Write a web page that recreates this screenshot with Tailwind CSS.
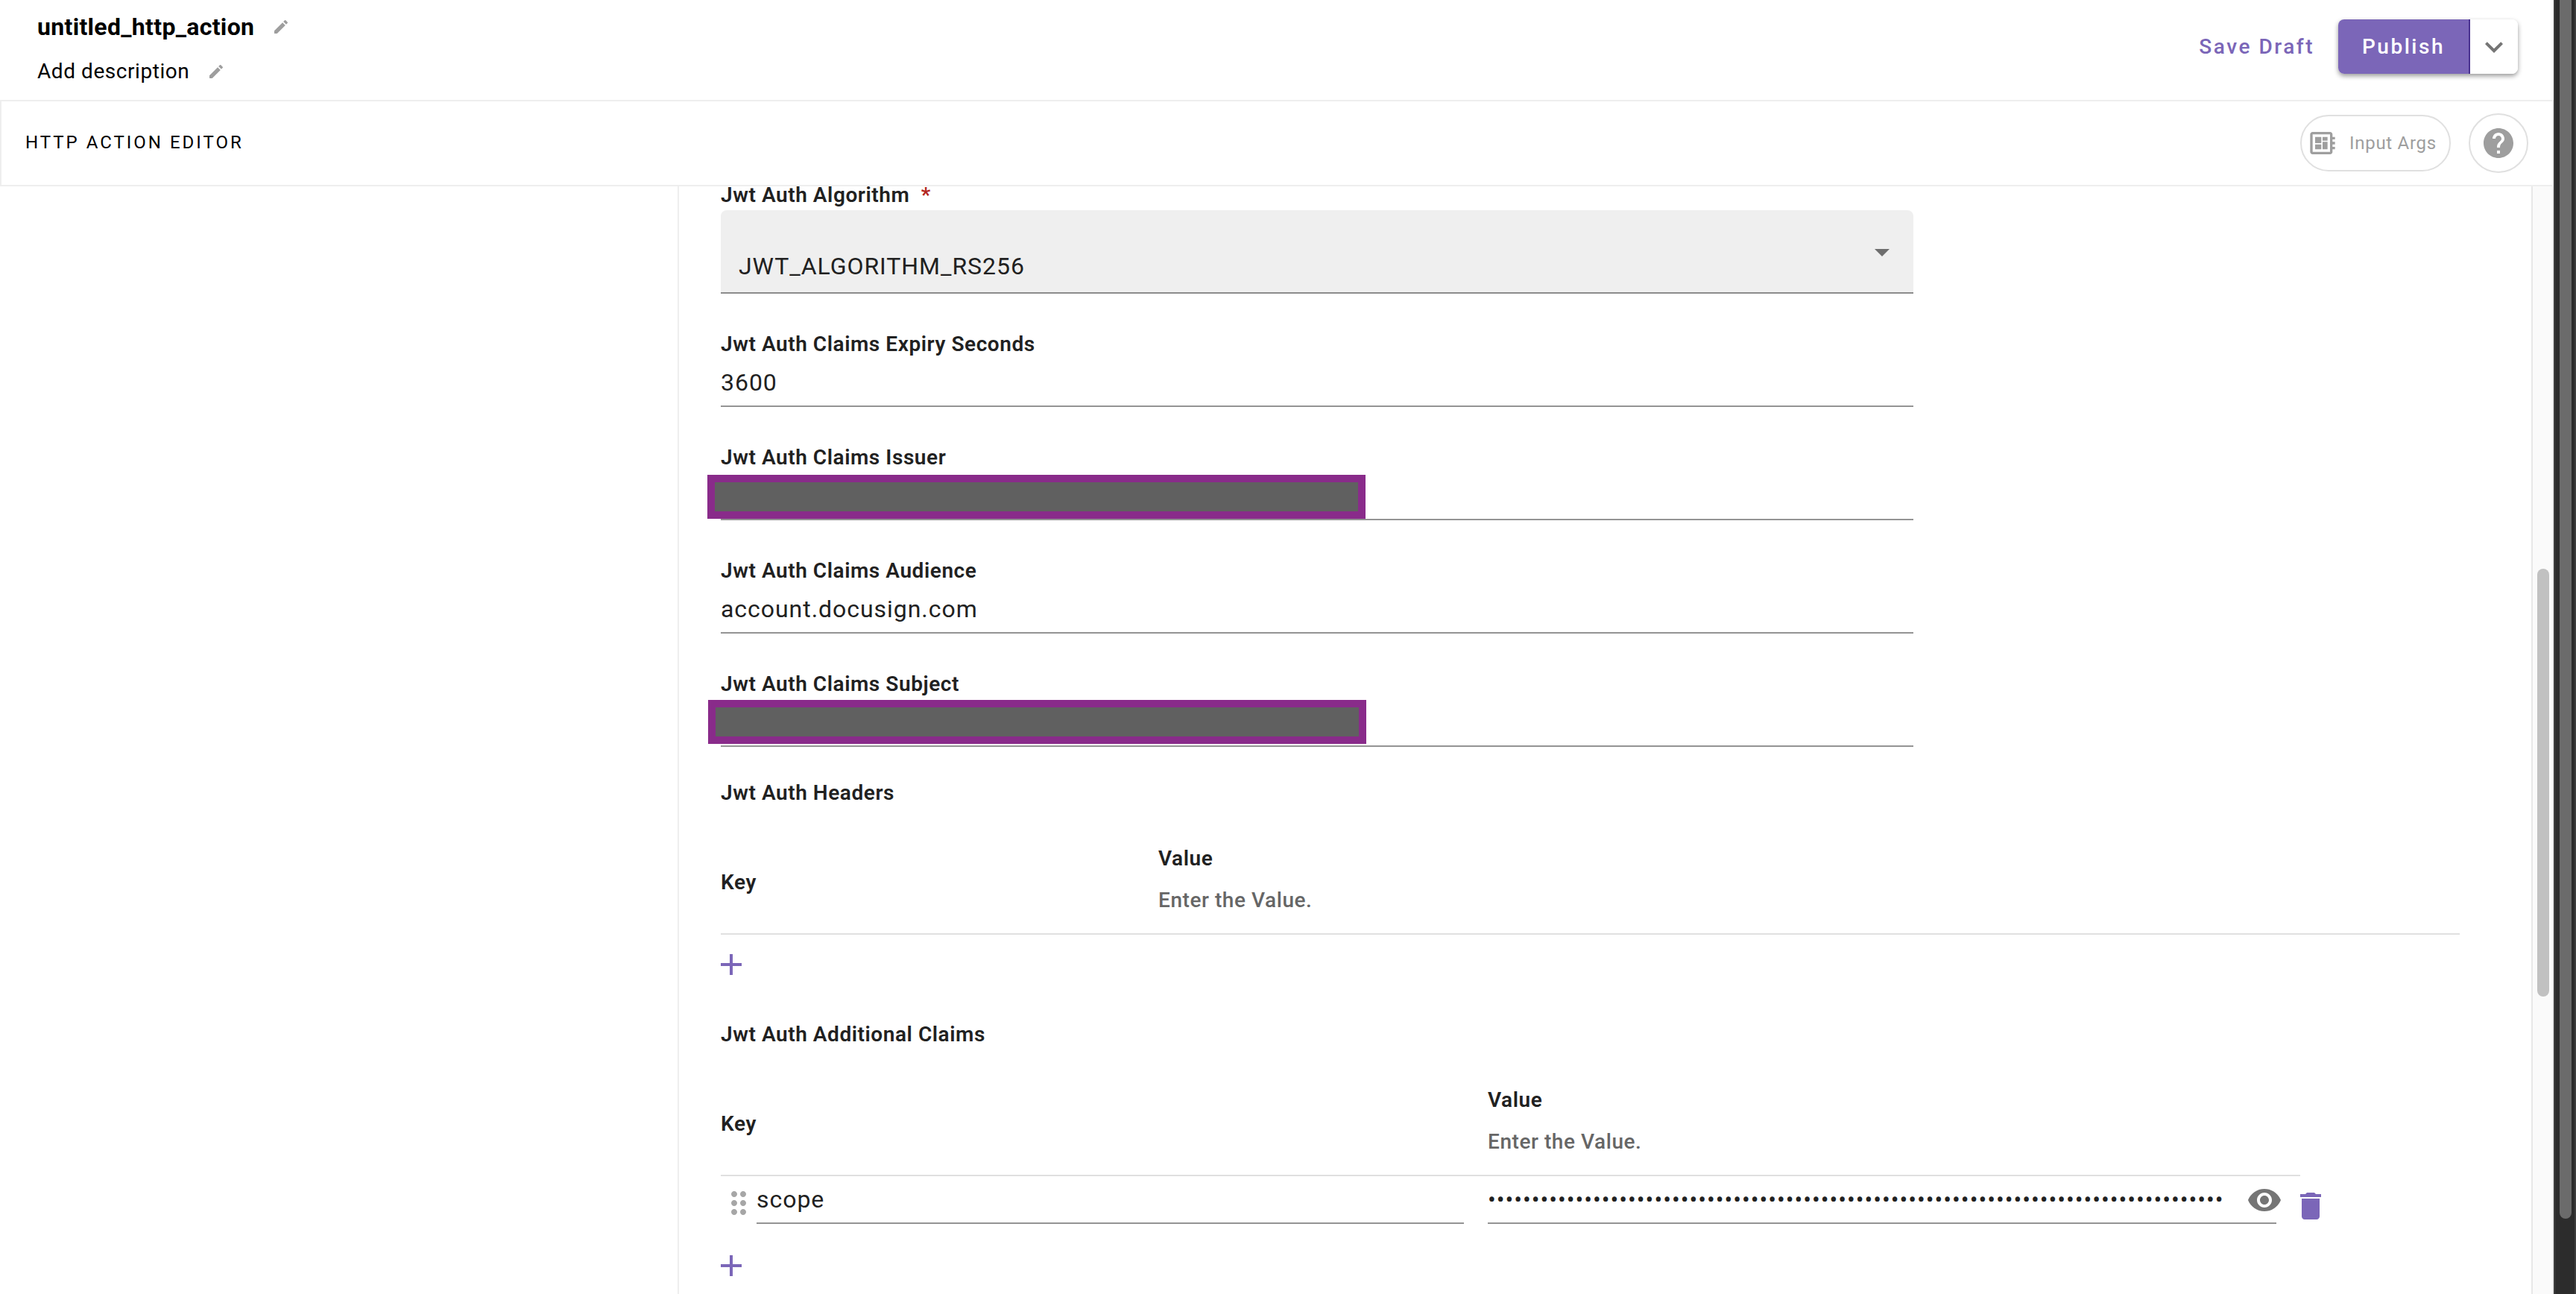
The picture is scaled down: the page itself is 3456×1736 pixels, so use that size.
<!DOCTYPE html>
<html lang="en">
<head>
<meta charset="utf-8">
<title>HTTP Action Editor</title>
<script src="https://cdn.jsdelivr.net/npm/@tailwindcss/browser@4"></script>
</head>
<body class="flex h-screen overflow-hidden bg-white font-[Roboto,sans-serif] text-[#212121]">

<div class="flex min-w-0 flex-1 flex-col">
  <!-- Title bar -->
  <header class="flex h-[134px] shrink-0 justify-between pl-[50px] pr-12 text-black">
    <div class="flex flex-col pt-4">
      <div class="flex h-10 items-center gap-6">
        <h1 class="text-[32px] leading-10 font-bold tracking-[0.01em]">untitled_http_action</h1>
        <button aria-label="Edit name" class="text-[#9e9e9e]"><svg class="size-6" viewBox="0 0 24 24" fill="currentColor"><path d="M3 17.25V21h3.75L17.81 9.94l-3.75-3.75L3 17.25zM20.71 7.04a1 1 0 0 0 0-1.41l-2.34-2.34a1 1 0 0 0-1.41 0l-1.83 1.83 3.75 3.75 1.83-1.83z"/></svg></button>
      </div>
      <div class="mt-5 flex h-10 items-center gap-6">
        <p class="text-[28px] leading-10 tracking-[0.02em]">Add description</p>
        <button aria-label="Edit description" class="text-[#9e9e9e]"><svg class="size-6" viewBox="0 0 24 24" fill="currentColor"><path d="M3 17.25V21h3.75L17.81 9.94l-3.75-3.75L3 17.25zM20.71 7.04a1 1 0 0 0 0-1.41l-2.34-2.34a1 1 0 0 0-1.41 0l-1.83 1.83 3.75 3.75 1.83-1.83z"/></svg></button>
      </div>
    </div>
    <div class="flex items-start gap-8 pt-[26px] text-[28px] font-medium tracking-[0.09em]">
      <button class="h-[73px] text-[#7b66b8]">Save Draft</button>
      <div class="flex h-[73px] overflow-visible rounded-lg shadow-[0_3px_6px_rgba(0,0,0,0.4)]">
        <button class="w-[177px] rounded-l-lg border-r-2 border-[#4a3290] bg-[#7b66b8] text-white">Publish</button>
        <button aria-label="More publish options" class="flex w-16 items-center justify-center rounded-r-lg bg-white text-[#757575]"><svg class="size-12" viewBox="0 0 24 24" fill="currentColor"><path d="M7.41 8.59 12 13.17l4.59-4.58L18 10l-6 6-6-6z"/></svg></button>
      </div>
    </div>
  </header>

  <!-- Editor toolbar -->
  <div class="flex h-[116px] shrink-0 items-center justify-between border-2 border-[#eeeeee] pl-8 pr-8 text-black">
    <h2 class="pb-0.5 text-[24px] leading-8 tracking-[0.125em]">HTTP ACTION EDITOR</h2>
    <div class="flex items-center gap-6 text-[#9e9e9e]">
      <button class="flex h-[76px] w-[202px] items-center gap-4 rounded-full border-2 border-[#e0e0e0] pl-2 text-[24px] leading-8 tracking-[0.03em]">
        <svg class="size-10" viewBox="0 0 24 24" fill="currentColor"><path d="M22 9V7h-2V5c0-1.100-.9-2-2-2H4c-1.100 0-2 .9-2 2v14c0 1.100.9 2 2 2h14c1.100 0 2-.9 2-2v-2h2v-2h-2v-2h2v-2h-2V9h2zm-4 10H4V5h14v14zM6 13h5v4H6v-4zm6-6h4v3h-4V7zM6 7h5v5H6V7zm6 4h4v6h-4v-6z"/></svg>
        Input Args
      </button>
      <button aria-label="Help" class="flex size-20 items-center justify-center rounded-full border-2 border-[#e0e0e0]">
        <svg class="size-12" viewBox="0 0 24 24" fill="currentColor"><path d="M12 2C6.480 2 2 6.480 2 12s4.480 10 10 10 10-4.480 10-10S17.520 2 12 2zm1 17h-2v-2h2v2zm2.070-7.750-.9.920C13.450 12.900 13 13.500 13 15h-2v-.5c0-1.100.450-2.100 1.170-2.830l1.240-1.260c.370-.360.590-.860.590-1.410 0-1.100-.9-2-2-2s-2 .9-2 2H8c0-2.210 1.790-4 4-4s4 1.790 4 4c0 .880-.360 1.680-.930 2.250z"/></svg>
      </button>
    </div>
  </div>

  <div class="flex min-h-0 flex-1 border-r-2 border-[#ebebeb]">
    <aside class="w-[911px] shrink-0 border-r-2 border-[#eeeeee]"></aside>
    <main class="min-w-0 flex-1 overflow-hidden pl-14 pr-24">
      <form>
        <div class="flex max-w-[1600px] flex-col gap-12">
          <div class="flex flex-col">
            <label for="alg" class="pb-2 text-[28px] leading-6 font-semibold tracking-[0.02em]">Jwt Auth Algorithm <span class="ml-2 text-[#b3261e]">*</span></label>
            <div class="relative">
              <select id="alg" class="h-28 w-full appearance-none rounded-t-lg border-b-2 border-[#8c8c8c] bg-[#efefef] px-6 pt-10 text-[32px] tracking-[0.03em]"><option>JWT_ALGORITHM_RS256</option></select>
              <svg class="pointer-events-none absolute top-8 right-[18px] size-12 text-[#6e6e6e]" viewBox="0 0 24 24" fill="currentColor"><path d="M7 10l5 5 5-5z"/></svg>
            </div>
          </div>
          <div class="flex flex-col">
            <label for="exp" class="text-[28px] leading-10 font-semibold tracking-[0.02em]">Jwt Auth Claims Expiry Seconds</label>
            <input id="exp" value="3600" class="h-16 border-b-2 border-[#949494] text-[32px] tracking-[0.03em]">
          </div>
          <div class="relative flex flex-col">
            <label for="iss" class="text-[28px] leading-10 font-semibold tracking-[0.02em]">Jwt Auth Claims Issuer</label>
            <input id="iss" class="h-16 border-b-2 border-[#949494] text-[32px] tracking-[0.03em]">
            <div class="absolute bottom-0.5 -left-[18px] h-[59px] w-[883px] border-[10px] border-[#892b8a] bg-[#606060]"></div>
          </div>
          <div class="flex flex-col">
            <label for="aud" class="text-[28px] leading-10 font-semibold tracking-[0.02em]">Jwt Auth Claims Audience</label>
            <input id="aud" value="account.docusign.com" class="h-16 border-b-2 border-[#949494] text-[32px] tracking-[0.03em]">
          </div>
          <div class="relative flex flex-col">
            <label for="sub" class="text-[28px] leading-10 font-semibold tracking-[0.02em]">Jwt Auth Claims Subject</label>
            <input id="sub" class="h-16 border-b-2 border-[#949494] text-[32px] tracking-[0.03em]">
            <div class="absolute bottom-1 -left-[17px] h-[59px] w-[883px] border-[10px] border-[#892b8a] bg-[#606060]"></div>
          </div>
        </div>

        <!-- Headers -->
        <h3 class="mt-[42px] text-[28px] leading-10 font-semibold tracking-[0.02em]">Jwt Auth Headers</h3>
        <table class="mt-7 w-full table-fixed border-separate border-spacing-0 text-left text-[28px] leading-10 tracking-[0.02em]">
          <thead>
            <tr>
              <th class="w-[587px] border-b-2 border-[#e0e0e0] p-0 pt-1 font-semibold">Key</th>
              <th class="border-b-2 border-[#e0e0e0] p-0 pt-5 pb-6 font-semibold">Value<p class="mt-4 font-medium text-[#666666]">Enter the Value.</p></th>
            </tr>
          </thead>
        </table>
        <button type="button" aria-label="Add header" class="mt-[26px] block text-[#7b66b8]"><svg class="size-7" viewBox="5 5 14 14" fill="currentColor"><path d="M19 13h-6v6h-2v-6H5v-2h6V5h2v6h6z"/></svg></button>

        <!-- Additional claims -->
        <h3 class="mt-[60px] text-[28px] leading-10 font-semibold tracking-[0.02em]">Jwt Auth Additional Claims</h3>
        <table class="mt-7 w-[2147px] table-fixed border-separate border-spacing-0 text-left text-[28px] leading-10 tracking-[0.02em]">
          <thead>
            <tr>
              <th class="w-[1029px] border-b-2 border-[#e0e0e0] p-0 pt-1 font-semibold">Key</th>
              <th class="border-b-2 border-[#e0e0e0] p-0 pt-5 pb-6 font-semibold">Value<p class="mt-4 font-medium text-[#666666]">Enter the Value.</p></th>
              <td class="w-7 p-0"></td>
            </tr>
          </thead>
          <tbody>
            <tr>
              <td class="p-0 pr-8">
                <div class="flex h-16 items-end">
                  <svg class="mb-1 size-12 shrink-0 text-[#a6a6a6]" viewBox="0 0 24 24" fill="currentColor"><path d="M11 18c0 1.100-.9 2-2 2s-2-.9-2-2 .9-2 2-2 2 .9 2 2zm-2-8c-1.100 0-2 .9-2 2s.9 2 2 2 2-.9 2-2-.9-2-2-2zm0-6c-1.100 0-2 .9-2 2s.9 2 2 2 2-.9 2-2-.9-2-2-2zm6 4c1.100 0 2-.9 2-2s-.9-2-2-2-2 .9-2 2 .9 2 2 2zm0 2c-1.100 0-2 .9-2 2s.9 2 2 2 2-.9 2-2-.9-2-2-2zm0 6c-1.100 0-2 .9-2 2s.9 2 2 2 2-.9 2-2-.9-2-2-2z"/></svg>
                  <input aria-label="Key" value="scope" class="h-16 min-w-0 flex-1 border-b-2 border-[#949494] text-[32px] tracking-[0.03em]">
                </div>
              </td>
              <td class="p-0 pr-8">
                <div class="relative flex h-16 border-b-2 border-[#949494]">
                  <input type="password" aria-label="Value" value="signature impersonation extended openid profile email organization_read user_read account_read group_read" class="mr-[70px] min-w-0 flex-1 text-[32px] tracking-[0.03em]">
                  <button type="button" aria-label="Show value" class="absolute top-2 -right-2 text-[#757575]"><svg class="size-12" viewBox="0 0 24 24" fill="currentColor"><path d="M12 4.500C7 4.500 2.730 7.610 1 12c1.730 4.390 6 7.500 11 7.500s9.270-3.110 11-7.500c-1.730-4.390-6-7.500-11-7.500zM12 17c-2.760 0-5-2.240-5-5s2.240-5 5-5 5 2.240 5 5-2.240 5-5 5zm0-8c-1.660 0-3 1.340-3 3s1.340 3 3 3 3-1.340 3-3-1.340-3-3-3z"/></svg></button>
                </div>
              </td>
              <td class="p-0 pb-1.5 align-bottom">
                <button type="button" aria-label="Delete claim" class="block text-[#7b66b8]"><svg class="h-9 w-7" viewBox="5 3 14 18" fill="currentColor"><path d="M6 19c0 1.100.9 2 2 2h8c1.100 0 2-.9 2-2V7H6v12zM19 4h-3.500l-1-1h-5l-1 1H5v2h14V4z"/></svg></button>
              </td>
            </tr>
          </tbody>
        </table>
        <button type="button" aria-label="Add claim" class="mt-[42px] block text-[#7b66b8]"><svg class="size-7" viewBox="5 5 14 14" fill="currentColor"><path d="M19 13h-6v6h-2v-6H5v-2h6V5h2v6h6z"/></svg></button>
      </form>
    </main>
    <!-- Inner scroll track -->
    <div class="w-7 shrink-0 border-l-2 border-[#e8e8e8] bg-[#fafafa] px-1.5 pt-[513px]">
      <div class="h-[574px] w-4 rounded-full bg-[#c1c1c1]"></div>
    </div>
  </div>
</div>

<!-- Outer scroll track -->
<div class="w-[30px] shrink-0 border-x-2 border-[#3d3d3d] bg-[#2c2c2c] pl-1.5">
  <div class="h-[1635px] w-4 rounded-b-full bg-[#6b6b6b]"></div>
</div>
</body>
</html>
